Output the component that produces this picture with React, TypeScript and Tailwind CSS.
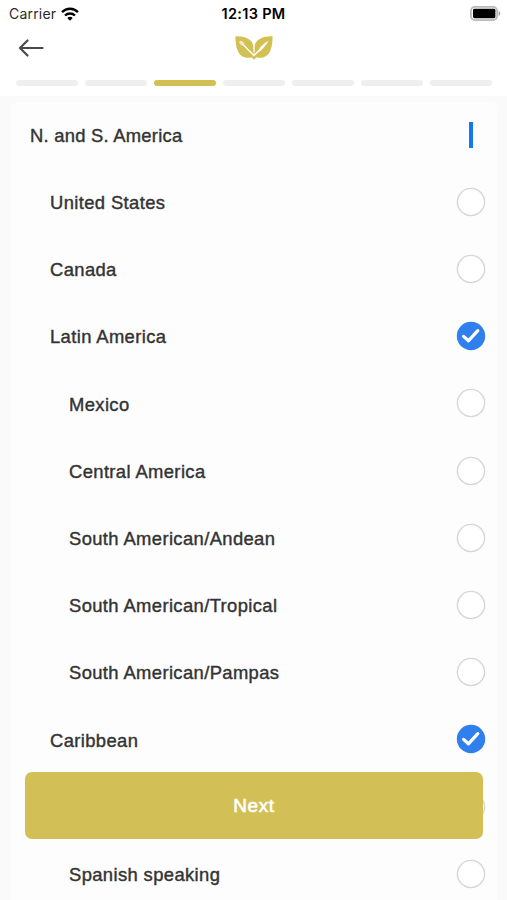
import React, { useState } from "react";

interface Region {
  id: number;
  name: string;
  level: number;
}

const regions: Region[] = [
  { id: 1, name: "United States", level: 1 },
  { id: 2, name: "Canada", level: 1 },
  { id: 3, name: "Latin America", level: 1 },
  { id: 4, name: "Mexico", level: 2 },
  { id: 5, name: "Central America", level: 2 },
  { id: 6, name: "South American/Andean", level: 2 },
  { id: 7, name: "South American/Tropical", level: 2 },
  { id: 8, name: "South American/Pampas", level: 2 },
  { id: 9, name: "Caribbean", level: 1 },
  { id: 10, name: "English speaking", level: 2 },
  { id: 11, name: "Spanish speaking", level: 2 },
];

const TOTAL_STEPS = 7;
const CURRENT_STEP = 2;

function StatusBar() {
  return (
    <div className="grid h-7 shrink-0 grid-cols-3 items-center pb-px pl-[9px] pr-[6px] font-['Inter',sans-serif] text-black">
      <div className="flex items-center gap-[5px]">
        <span className="text-[14px] leading-none tracking-[0.2px] text-[#2a2a2a]">Carrier</span>
        <svg width="18" height="14" viewBox="0 0 18 14" fill="none" stroke="#000" strokeWidth="2.4">
          <path d="M1 5.2C5.5 0.6 12.5 0.6 17 5.2" />
          <path d="M4 8.5C6.8 5.8 11.2 5.8 14 8.5" />
          <path d="M6.3 10.9C7.8 9.5 10.2 9.5 11.7 10.9L9 13.7Z" fill="#000" stroke="none" />
        </svg>
      </div>
      <span className="-ml-[3px] pt-[2px] text-center text-[14.5px] font-semibold leading-none tracking-[0.3px]">12:13 PM</span>
      <div className="flex justify-end">
        <svg width="31" height="15" viewBox="0 0 31 15">
          <rect x="0.9" y="0.9" width="26.2" height="13.2" rx="4" fill="#fff" stroke="#b8b8b8" strokeWidth="1.8" />
          <rect x="3" y="2.8" width="22.4" height="9.4" rx="1.4" fill="#000" />
          <path d="M28.6 5V10C30.8 9.2 30.8 5.8 28.6 5Z" fill="#a0a0a0" />
        </svg>
      </div>
    </div>
  );
}

function Logo() {
  return (
    <svg width="38" height="24" viewBox="0 0 38 24">
      <path d="M0.4 0.4C9 0 17.5 3 18.6 10.5L18.8 20C17 22 13 22.2 9.5 21.2C3 19.3 0.4 11 0.4 0.4Z" fill="#d2c052" />
      <path d="M37.6 0.4C29 0 20.5 3 19.4 10.5L19.2 20C21 22 25 22.2 28.5 21.2C35 19.3 37.6 11 37.6 0.4Z" fill="#d2c052" />
      <path d="M15.5 20.3H22.5L19 23.8Z" fill="#d2c052" />
      <path d="M7 7.5L19 19.5" stroke="#fff" strokeWidth="1.5" />
      <path d="M19 9V16" stroke="#fff" strokeWidth="0.9" />
      <ellipse cx="6.7" cy="7.2" rx="2.9" ry="1.9" transform="rotate(42 6.7 7.2)" fill="#fae2cb" />
      <path d="M33.5 4.8C29.5 6.8 25.5 10 23.4 14.4L25 15.4C28.2 12.6 31.5 8.8 33.5 4.8Z" fill="#fff" />
      <path d="M24.8 14L18.5 19.7" stroke="#fff" strokeWidth="1.5" />
    </svg>
  );
}

function Checkbox({ checked }: { checked: boolean }) {
  return (
    <svg width="30" height="30" viewBox="0 0 30 30" fill="none" className="mb-[2px]">
      {checked ? (
        <>
          <circle cx="15" cy="15" r="14.2" fill="#2f80ed" />
          <path d="M7.6 15.4L12.4 19.8L21.8 9.7" stroke="#fff" strokeWidth="3.2" strokeLinecap="round" strokeLinejoin="round" />
        </>
      ) : (
        <circle cx="15" cy="15" r="13.6" fill="#fff" stroke="#d6d6d6" strokeWidth="1.4" />
      )}
    </svg>
  );
}

export default function App() {
  const [selected, setSelected] = useState<number[]>([3, 9]);

  const toggle = (id: number) => {
    setSelected((prev) => (prev.includes(id) ? prev.filter((item) => item !== id) : [...prev, id]));
  };

  return (
    <div className="relative flex h-[900px] w-[507px] flex-col overflow-hidden bg-white font-['Liberation_Sans',Arial,sans-serif] text-[#333333]">
      <StatusBar />

      <div className="grid h-10 shrink-0 grid-cols-3 items-center px-[18px]">
        <button aria-label="Back" className="w-[26px]">
          <svg width="26" height="18" viewBox="0 0 26 18" fill="none" stroke="#4a4a4a" strokeWidth="2.2" strokeLinecap="round" strokeLinejoin="round">
            <path d="M24.5 9H2M9.5 1.5L2 9L9.5 16.5" />
          </svg>
        </button>
        <div className="flex justify-center">
          <Logo />
        </div>
      </div>

      <div className="flex h-7 shrink-0 gap-[7px] px-[15.5px] pt-3">
        {Array.from({ length: TOTAL_STEPS }).map((_, index) => (
          <div
            key={index}
            className={`h-[6px] flex-1 rounded-full ${index === CURRENT_STEP ? "bg-[#d2c052]" : "bg-[#efefef]"}`}
          />
        ))}
      </div>

      <div className="min-h-0 flex-1 bg-[#fafafa] pl-[11px] pr-[10px] pt-[6.1px]">
        <div className="rounded-t-md bg-[#fdfdfd]">
          <div className="flex h-[67.2px] items-center justify-between pl-[19px] pr-[24px]">
            <span className="text-[18.4px] tracking-[0.25px] [-webkit-text-stroke:0.4px_#333333]">N. and S. America</span>
            <div className="mb-px h-[26px] w-1 bg-[#1677f5]" />
          </div>

          {regions.map((region) => (
            <div
              key={region.id}
              onClick={() => toggle(region.id)}
              className={`flex h-[67.2px] items-center justify-between pr-[11px] ${region.level === 1 ? "pl-[39px]" : "pl-[58px]"}`}
            >
              <span className="text-[18.4px] tracking-[0.38px] [-webkit-text-stroke:0.4px_#333333]">{region.name}</span>
              <Checkbox checked={selected.includes(region.id)} />
            </div>
          ))}
        </div>
      </div>

      <button className="absolute bottom-[61px] left-[25px] right-[24px] h-[67px] rounded-[7px] bg-[#d2c056] pt-px text-[19px] tracking-[0.6px] text-white [-webkit-text-stroke:0.6px_#ffffff]">
        Next
      </button>
    </div>
  );
}
